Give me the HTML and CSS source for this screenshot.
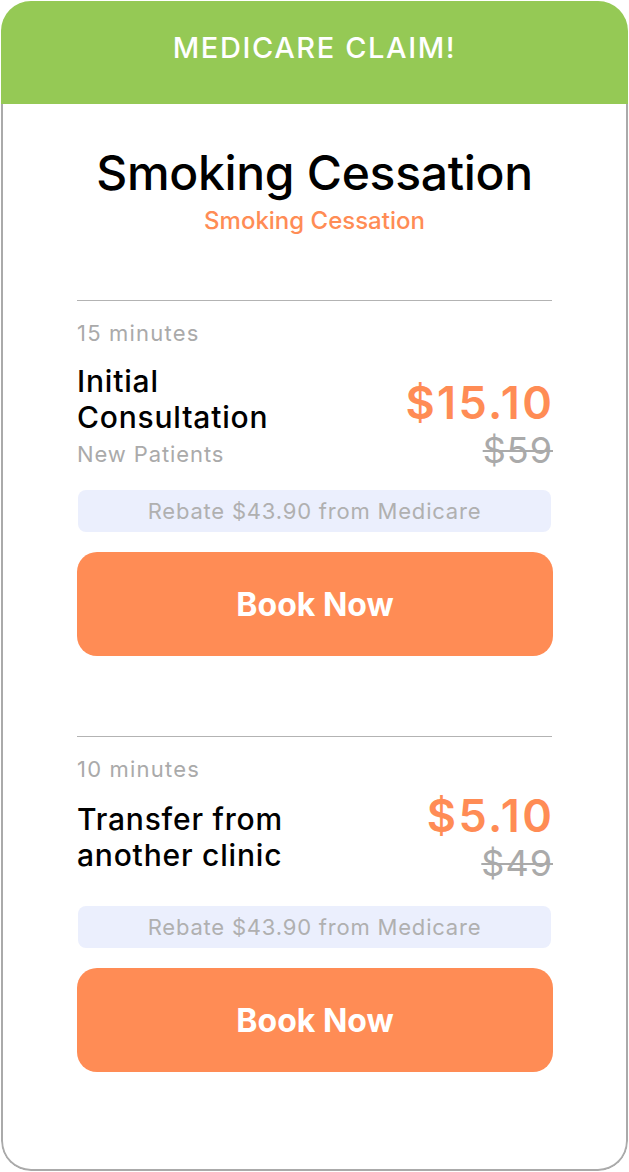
FILE: index.html
```html
<!DOCTYPE html>
<html lang="en">
<head>
<meta charset="utf-8">
<title>Medicare Claim</title>
<link rel="stylesheet" href="styles.css">
</head>
<body>
<div class="card">
  <div class="banner">MEDICARE CLAIM!</div>
  <div class="body">
    <h1 class="title">Smoking Cessation</h1>
    <div class="subtitle">Smoking Cessation</div>

    <section class="service">
      <div class="duration">15 minutes</div>
      <div class="row row-end">
        <div class="info">
          <div class="name">Initial<br>Consultation</div>
          <div class="note">New Patients</div>
        </div>
        <div class="prices">
          <div class="price">$15.10</div>
          <div class="old">$59</div>
        </div>
      </div>
      <div class="rebate">Rebate $43.90 from Medicare</div>
      <button class="book">Book Now</button>
    </section>

    <section class="service second">
      <div class="duration">10 minutes</div>
      <div class="row row-center">
        <div class="info">
          <div class="name">Transfer from<br>another clinic</div>
        </div>
        <div class="prices">
          <div class="price">$5.10</div>
          <div class="old">$49</div>
        </div>
      </div>
      <div class="rebate">Rebate $43.90 from Medicare</div>
      <button class="book">Book Now</button>
    </section>
  </div>
</div>
</body>
</html>
```

FILE: styles.css
```css
* { box-sizing: border-box; }
html, body { margin: 0; padding: 0; background: #fff; }
body {
  font-family: Inter, "Noto Sans", "Liberation Sans", sans-serif;
  width: 629px;
  height: 1172px;
  padding: 1px;
}
.card {
  width: 627px;
  height: 1170px;
  border-radius: 30px;
  overflow: hidden;
  display: flex;
  flex-direction: column;
}
.banner {
  height: 103px;
  flex: none;
  background: #95c955;
  color: #fff;
  font-size: 29px;
  font-weight: 500;
  text-align: center;
  padding-top: 30px;
  line-height: 34px;
  letter-spacing: 1.6px;
}
.body {
  flex: 1;
  border: 2px solid #aaaaaa;
  border-top: 0;
  border-radius: 0 0 30px 30px;
  padding: 0 74px;
  display: flex;
  flex-direction: column;
}
.title {
  margin: 41px 0 0;
  text-align: center;
  font-size: 48px;
  line-height: 56px;
  font-weight: 500;
  color: #000;
  letter-spacing: -0.3px;
}
.subtitle {
  text-align: center;
  color: #ff8c55;
  font-size: 24px;
  font-weight: 500;
  line-height: 28px;
  margin-top: 6px;
}
.service {
  border-top: 1px solid #b3b3b3;
  margin-top: 65px;
  padding-top: 19px;
  display: flex;
  flex-direction: column;
}
.service.second { margin-top: 80px; }
.duration {
  color: #aaaaaa;
  font-size: 22px;
  line-height: 26px;
  letter-spacing: 1.2px;
}
.row {
  display: flex;
  justify-content: space-between;
}
.row-end { align-items: flex-end; margin-top: 17px; }
.row-center { align-items: center; margin-top: 10px; }
.name {
  font-size: 30px;
  font-weight: 500;
  line-height: 36px;
  letter-spacing: 0.8px;
  color: #000;
}
.note {
  color: #aaaaaa;
  font-size: 22px;
  line-height: 28px;
  letter-spacing: 0.9px;
  margin-top: 5px;
}
.prices { text-align: right; }
.price {
  color: #ff8c55;
  font-size: 45px;
  font-weight: 600;
  line-height: 48px;
  letter-spacing: 2.4px;
  margin-right: -2.4px;
}
.old {
  color: #aaaaaa;
  font-size: 36px;
  line-height: 36px;
  letter-spacing: 1px;
  margin-right: -1px;
  margin-top: 5px;
  text-decoration: line-through;
  text-decoration-thickness: 2px;
}
.rebate {
  margin: 22px 1px 0;
  height: 42px;
  background: #ebeffd;
  border-radius: 8px;
  color: #b0b0b0;
  font-size: 22px;
  line-height: 42px;
  letter-spacing: 0.8px;
  text-align: center;
}
.second .rebate { margin-top: 25px; }
.book {
  margin-top: 20px;
  width: 476px;
  height: 104px;
  border: 0;
  border-radius: 20px;
  background: #ff8c55;
  color: #fff;
  font-family: inherit;
  font-size: 32px;
  font-weight: 700;
  cursor: pointer;
}
```
